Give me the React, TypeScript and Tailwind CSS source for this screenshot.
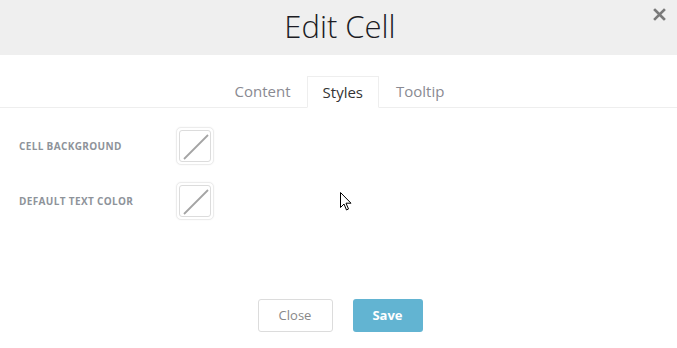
import React from 'react'

function Swatch() {
    return (
        <div className="w-[38px] h-[38px] rounded-[5px] border border-[#ececec] p-[2px] bg-white shadow-[0_0_2px_rgba(0,0,0,0.05)]">
            <div className="w-full h-full rounded-[3px] border border-[#dcdcdc] bg-white">
                <svg width="32" height="32" viewBox="0 0 32 32">
                    <line x1="4" y1="28" x2="28" y2="4" stroke="#a4a4a4" strokeWidth="1.8" />
                </svg>
            </div>
        </div>
    )
}

export default function App() {
    const font = { fontFamily: '"Open Sans", "Liberation Sans", sans-serif' }
    return (
        <div className="relative w-[677px] h-[348px] bg-white overflow-hidden" style={font}>
            <div className="relative h-[55px] bg-[#efefef] flex items-center justify-center">
                <h1 className="text-[31px] font-[350] text-[#1c1c24] leading-none mt-[-2px] pl-[3px]">Edit Cell</h1>
                <button className="absolute right-[11px] top-[8px]">
                    <svg width="13" height="13" viewBox="0 0 13 13">
                        <path d="M2 2 L11 11 M11 2 L2 11" stroke="#7a7a7a" strokeWidth="2.6" strokeLinecap="square" />
                    </svg>
                </button>
            </div>

            <div className="mt-[21px] flex justify-center border-b border-[#eeeeee]">
                <div className="flex items-end h-[31px] pl-[3px]">
                    <div className="px-[16px] h-full flex items-center text-[15px] text-[#8a8a92]">Content</div>
                    <div className="px-[15px] h-[32px] mb-[-1px] flex items-center text-[15px] text-[#333] bg-white border border-[#eeeeee] border-b-white">Styles</div>
                    <div className="px-[17px] h-full flex items-center text-[15px] text-[#8a8a92]">Tooltip</div>
                </div>
            </div>

            <div className="pt-[19px] flex flex-col gap-[17px]">
                <div className="flex items-center h-[38px]">
                    <div className="w-[176px] pl-[19px] text-[10px] font-bold text-[#8e939a] uppercase tracking-[0.35px]">Cell Background</div>
                    <Swatch />
                </div>
                <div className="flex items-center h-[38px]">
                    <div className="w-[176px] pl-[19px] text-[10px] font-bold text-[#8e939a] uppercase tracking-[0.35px]">Default Text Color</div>
                    <Swatch />
                </div>
            </div>

            <div className="absolute left-[340px] top-[192px]">
                <svg width="13" height="20" viewBox="0 0 13 20">
                    <path d="M0.5 0.5 L0.5 15.5 L4 12 L6.5 18 L8.5 17 L6 11.2 L11 11.2 Z" fill="white" stroke="black" strokeWidth="1" strokeLinejoin="miter" />
                </svg>
            </div>

            <div className="mt-[79px] flex justify-center gap-[20px] pl-[3px]">
                <button className="w-[75px] h-[33px] rounded-[3px] border border-[#dcdcdc] bg-white text-[13px] text-[#888]">Close</button>
                <button className="w-[70px] h-[33px] rounded-[3px] bg-[#62b4d2] text-[13px] font-bold text-white">Save</button>
            </div>
        </div>
    )
}
